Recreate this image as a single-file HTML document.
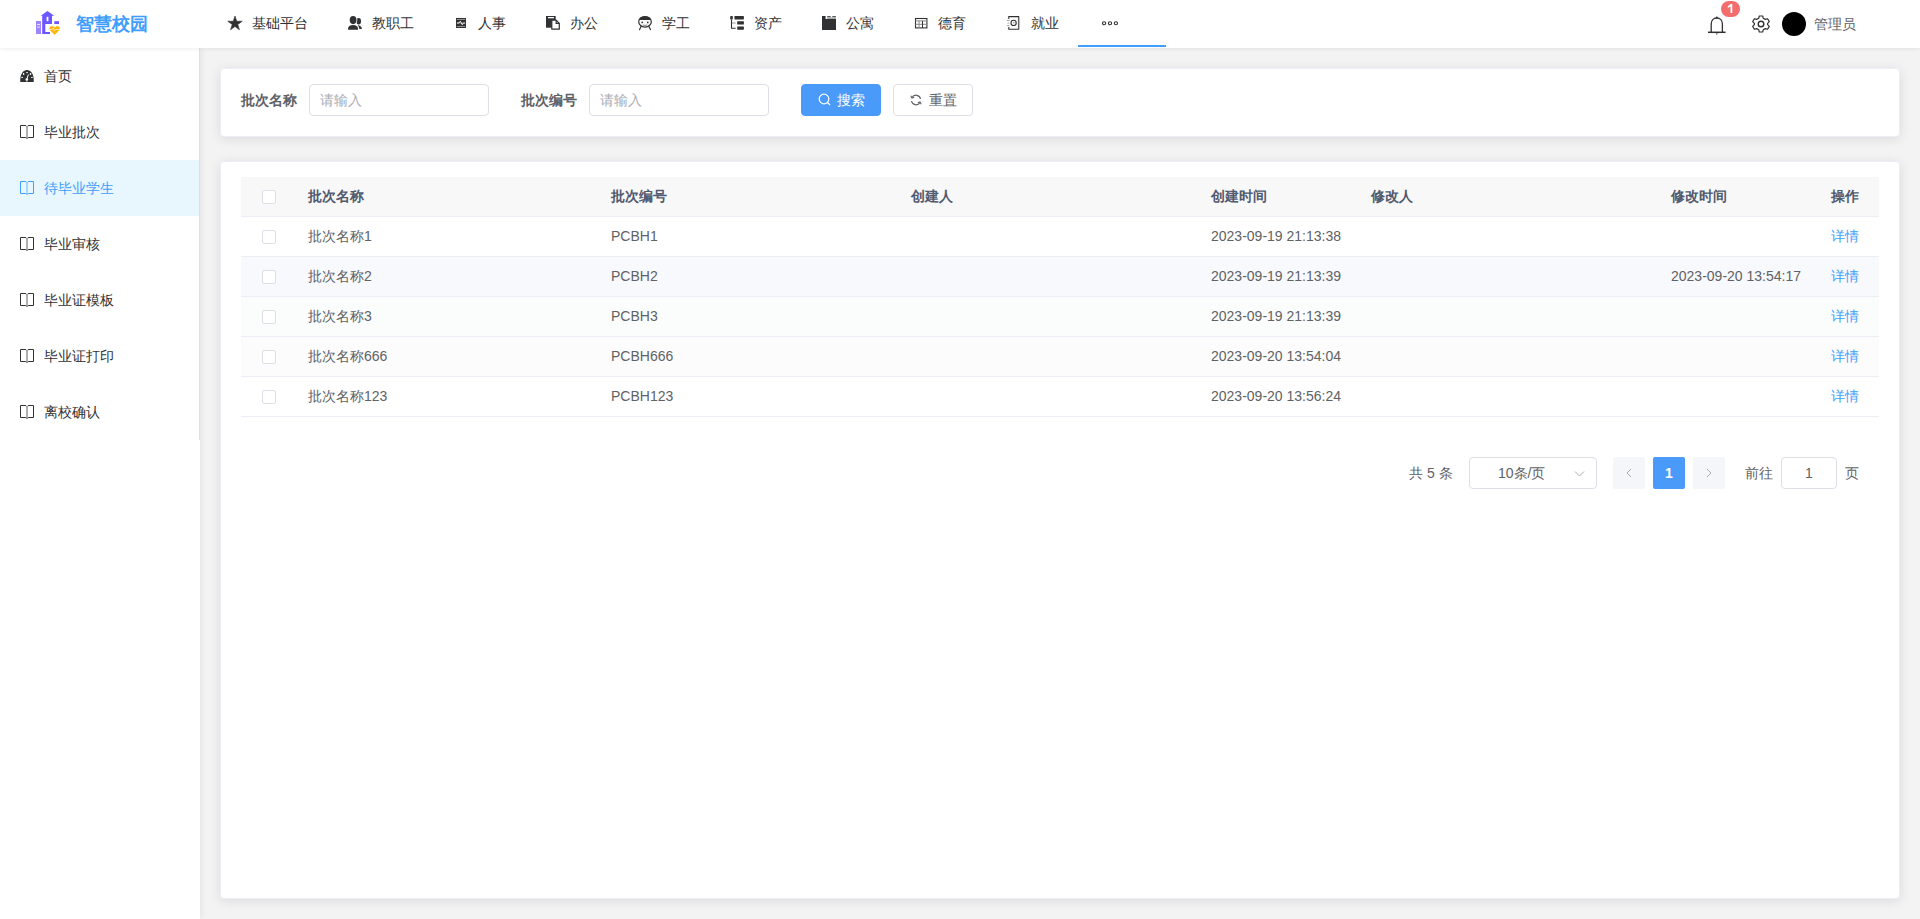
<!DOCTYPE html>
<html><head><meta charset="utf-8">
<style>
*{margin:0;padding:0;box-sizing:border-box}
html,body{width:1920px;height:919px;overflow:hidden;background:#fff;font-family:"Liberation Sans",sans-serif;font-size:14px;color:#606266}
.abs{position:absolute}
#header{position:absolute;left:0;top:0;width:1920px;height:48px;background:#fff;z-index:5;box-shadow:0 1px 4px rgba(0,21,41,.08)}
.nav{position:absolute;top:0;height:48px;line-height:48px;color:#303133;white-space:nowrap}
.nav svg{position:absolute;top:16px;left:0;overflow:visible}
.nav span{position:absolute;left:24px;top:-1px}
#side{position:absolute;left:0;top:48px;width:200px;height:871px;background:#fff;z-index:3;box-shadow:2px 0 6px rgba(0,21,41,.06)}
#menu{position:absolute;left:0;top:0;width:200px;height:392px;border-right:1px solid #dcdfe6}
.mi{position:absolute;left:0;width:199px;height:56px;line-height:56px;color:#303133}
.mi.act{background:#e8f7fe;color:#409eff}
.mi svg{position:absolute;left:20px;top:21px}
.mi span{position:absolute;left:44px;top:0}
#main{position:absolute;left:200px;top:48px;width:1720px;height:871px;background:#f3f3f3}
.card{position:absolute;background:#fff;border:1px solid #ebeef5;border-radius:4px;box-shadow:0 2px 12px 0 rgba(0,0,0,.1)}
.lbl{position:absolute;top:84px;height:32px;line-height:32px;font-weight:bold;color:#606266}
.inp{position:absolute;top:84px;height:32px;width:180px;border:1px solid #dcdfe6;border-radius:4px;line-height:30px;padding-left:10px;color:#a8abb2;background:#fff}
.btn{position:absolute;top:84px;height:32px;width:80px;border-radius:4px;line-height:30px}
table{border-collapse:collapse;table-layout:fixed}

.tr{position:absolute;left:241px;width:1638px;height:40px;border-bottom:1px solid #ebeef5;line-height:39px;color:#606266}
.tr.th{background:#f8f8f9;color:#515a6e;font-weight:bold}
.tr span{position:absolute;top:0;white-space:nowrap}
.tr .lnk{color:#409eff}
.cb{position:absolute;left:21px;top:13px;width:14px;height:14px;border:1px solid #dcdfe6;border-radius:2px;background:#fff}
</style></head><body>

<div id="header">
  <!-- logo -->
  <svg class="abs" style="left:36px;top:10px" width="26" height="26" viewBox="0 0 26 26">
    <rect x="0" y="11" width="5" height="13" fill="#9d85ff"/>
    <rect x="1" y="14" width="3" height="1" fill="#fff" opacity=".8"/><rect x="1" y="16.6" width="3" height="1" fill="#fff" opacity=".8"/>
    <path d="M4.8 5.7 L11.4 0.9 L18.3 5.7 L16 5.7 L16 14 L9.3 14 L9.3 22 L14 22 L14 24 L6.2 24 L6.2 5.7 Z" fill="#6b57ff"/>
    <rect x="10.6" y="6.8" width="1.8" height="4.4" fill="#fff"/>
    <rect x="18.3" y="11.2" width="4.7" height="2.8" fill="#6b57ff"/>
    <path d="M18.6 25.3 L13.9 20.6 C12.4 19.1 12.9 15.7 15.9 15.7 C17.2 15.7 18.1 16.5 18.6 17.2 C19.1 16.5 20 15.7 21.3 15.7 C24.3 15.7 24.8 19.1 23.3 20.6 Z" fill="#ffb400" stroke="#fff" stroke-width="0.9"/>
    <path d="M14 19.4 L16.3 19.4 L17.2 18 L18.4 20.8 L19.4 19.4 L23.2 19.4" fill="none" stroke="#fff" stroke-width="0.7"/>
  </svg>
  <div class="abs" style="left:76px;top:0;height:48px;line-height:48px;font-size:18px;font-weight:bold;color:#409eff;letter-spacing:0px">智慧校园</div>

  <div class="nav" style="left:228px"><svg width="14" height="14" viewBox="0 0 14 14"><path d="M7.00 0.00 L8.71 5.25 L14.23 5.25 L9.76 8.50 L11.47 13.75 L7.00 10.50 L2.53 13.75 L4.24 8.50 L-0.23 5.25 L5.29 5.25 Z" fill="#303133" stroke="#303133" stroke-width="0.6" stroke-linejoin="round"/></svg><span>基础平台</span></div>
  <div class="nav" style="left:348px"><svg width="14" height="14" viewBox="0 0 14 14"><ellipse cx="10.7" cy="5.3" rx="2.3" ry="3.2" fill="#303133"/><path d="M9.5 9 C12 9.2 13.9 10.8 13.9 12.9 L11.5 12.9 Z" fill="#303133"/><ellipse cx="5.1" cy="4.1" rx="4.2" ry="4.9" fill="#fff"/><path d="M-0.7 14 L-0.7 12 C-0.7 9.5 1.5 8.1 5 8.1 C8.5 8.1 10.8 9.5 10.8 12 L10.8 14 Z" fill="#fff"/><ellipse cx="5.1" cy="4.1" rx="3.4" ry="4.1" fill="#303133"/><path d="M0.1 13.8 L0.1 12.2 C0.1 10.2 2 8.9 5 8.9 C8 8.9 10 10.2 10 12.2 L10 13.8 Z" fill="#303133"/></svg><span>教职工</span></div>
  <div class="nav" style="left:455px"><svg width="14" height="14" viewBox="0 0 14 14"><rect x="1" y="2" width="10" height="10" fill="#303133"/><rect x="1.8" y="3.2" width="8.4" height="0.7" fill="#bbb"/><rect x="1.8" y="10.1" width="8.4" height="0.7" fill="#bbb"/><rect x="1.8" y="6.6" width="8.4" height="0.9" fill="#888"/><path d="M2 7 L4 7 L5.3 5.2 L7.3 8.8 L8.3 7 L10 7" stroke="#fff" stroke-width="0.9" fill="none"/></svg><span style="left:23px">人事</span></div>
  <div class="nav" style="left:546px"><svg width="14" height="14" viewBox="0 0 14 14"><rect x="0" y="0" width="9.7" height="11.7" fill="#303133"/><rect x="2" y="1" width="6" height="1.3" fill="#fff"/><path d="M5.8 4.1 H10.2 L13.3 7.3 V13.2 H5.8 Z" fill="#fff" stroke="#303133" stroke-width="1.2" stroke-linejoin="round"/><path d="M10.2 4.1 V7.3 H13.3" fill="none" stroke="#303133" stroke-width="1.2"/></svg><span>办公</span></div>
  <div class="nav" style="left:638px"><svg width="14" height="14" viewBox="0 0 14 14"><ellipse cx="7" cy="5.8" rx="6.3" ry="5.3" fill="#fff" stroke="#303133" stroke-width="1.2"/><path d="M1 4 C1.6 1.2 4.3 0.3 7 0.3 C9.7 0.3 12.4 1.2 13 4 Z" fill="#303133"/><circle cx="4.2" cy="6.4" r="0.85" fill="#303133"/><circle cx="9.8" cy="6.4" r="0.85" fill="#303133"/><path d="M4.8 8.8 Q7 10.2 9.2 8.8" stroke="#888" stroke-width="1" fill="none"/><path d="M3.2 10.3 L1.6 13.6 M10.8 10.3 L12.4 13.6" stroke="#303133" stroke-width="1.2" stroke-linecap="round"/></svg><span>学工</span></div>
  <div class="nav" style="left:730px"><svg width="14" height="14" viewBox="0 0 14 14"><rect x="0.2" y="0.1" width="2.6" height="3.3" rx="0.6" fill="#303133"/><path d="M1.5 3.4 V12.3 H5.7" stroke="#303133" stroke-width="1.1" fill="none"/><path d="M2 7 H5.7" stroke="#999" stroke-width="1"/><rect x="4.5" y="0" width="9.4" height="3.5" rx="0.4" fill="#303133"/><rect x="7.2" y="5.2" width="6.7" height="3.4" rx="0.4" fill="#303133"/><rect x="7.2" y="10.4" width="6.7" height="3.3" rx="0.4" fill="#303133"/></svg><span>资产</span></div>
  <div class="nav" style="left:822px"><svg width="14" height="14" viewBox="0 0 14 14"><path d="M0 0 H3.6 V3 H14 V14 H0 Z" fill="#303133"/><rect x="5.2" y="0.2" width="3.5" height="1.1" fill="#303133"/><rect x="10.3" y="0.2" width="3.6" height="1.1" fill="#303133"/><rect x="5.2" y="1.3" width="8.7" height="1.7" fill="#aaa"/></svg><span>公寓</span></div>
  <div class="nav" style="left:914px"><svg width="14" height="14" viewBox="0 0 14 14"><rect x="1.5" y="2.5" width="11.4" height="9.4" fill="none" stroke="#303133" stroke-width="1.1"/><path d="M1.5 4.9 H12.9 M5 4.9 V11.9 M1.5 8.3 H12.9" stroke="#888" stroke-width="1"/><path d="M8.5 4.9 V11.9" stroke="#303133" stroke-width="1"/></svg><span>德育</span></div>
  <div class="nav" style="left:1007px"><svg width="14" height="14" viewBox="0 0 14 14"><path d="M1.8 3 V0.6 H11.6 V13.2 H1.8 V11" stroke="#303133" stroke-width="1.1" fill="none"/><path d="M11.6 1 V13" stroke="#666" stroke-width="1.4"/><path d="M0 4.5 H2.6 M0.4 7.2 H2.2 M0 9.6 H2.6" stroke="#999" stroke-width="0.9"/><circle cx="6.6" cy="6.9" r="2.6" fill="none" stroke="#303133" stroke-width="1.1"/><circle cx="6.8" cy="6.7" r="0.8" fill="#999"/></svg><span>就业</span></div>
  <svg class="abs" style="left:1102px;top:20px" width="17" height="6" viewBox="0 0 17 6"><ellipse cx="2.1" cy="3.3" rx="1.6" ry="1.5" fill="none" stroke="#303133" stroke-width="1.1"/><ellipse cx="8" cy="3.3" rx="1.6" ry="1.5" fill="none" stroke="#303133" stroke-width="1.1"/><ellipse cx="13.9" cy="3.3" rx="1.6" ry="1.5" fill="none" stroke="#303133" stroke-width="1.1"/></svg>
  <div class="abs" style="left:1078px;top:45px;width:88px;height:2px;background:#409eff"></div>

  <!-- right -->
  <svg class="abs" style="left:1707px;top:15px" width="20" height="20" viewBox="0 0 20 20"><path d="M4.2 17 L4.2 9 C4.2 5.5 6.5 3 9.8 3 C13.1 3 15.4 5.5 15.4 9 L15.4 17" fill="none" stroke="#303133" stroke-width="1.3"/><path d="M1 17.3 L18.6 17.3" stroke="#303133" stroke-width="1.5"/><circle cx="9.8" cy="2.5" r="1" fill="#303133"/><path d="M8.6 18.5 L11 18.5 L9.8 19.8Z" fill="#303133"/></svg>
  <svg class="abs" style="left:1721px;top:1px" width="19" height="16" viewBox="0 0 19 16"><rect x="0" y="0" width="19" height="16" rx="8" fill="#f56c6c"/><path d="M6.8 5.2 L9.6 3.1 L11.3 3.1 L11.3 12.1 L9.5 12.1 L9.5 5.6 L6.8 7.1 Z" fill="#fff"/></svg>
  <svg class="abs" style="left:1751px;top:14px" width="20" height="20" viewBox="0 0 20 20"><path d="M8.3 2 L11.7 2 L12.3 4.3 L14.3 5.4 L16.6 4.7 L18.3 7.6 L16.6 9.3 L16.6 10.7 L18.3 12.4 L16.6 15.3 L14.3 14.6 L12.3 15.7 L11.7 18 L8.3 18 L7.7 15.7 L5.7 14.6 L3.4 15.3 L1.7 12.4 L3.4 10.7 L3.4 9.3 L1.7 7.6 L3.4 4.7 L5.7 5.4 L7.7 4.3 Z" fill="none" stroke="#303133" stroke-width="1.2" stroke-linejoin="round"/><circle cx="10" cy="10" r="2.8" fill="none" stroke="#303133" stroke-width="1.4"/></svg>
  <div class="abs" style="left:1782px;top:12px;width:24px;height:24px;border-radius:12px;background:#000"></div>
  <div class="abs" style="left:1814px;top:0;line-height:48px;color:#606266">管理员</div>
</div>

<div id="side">
  <div id="menu">
    <div class="mi" style="top:0"><svg width="14" height="14" viewBox="0 0 14 14" style="top:22px"><path d="M0.3 11.9 C-0.2 4.5 3 0.1 7 0.1 C11 0.1 14.2 4.5 13.7 11.9 Z" fill="#303133"/><ellipse cx="3.6" cy="3.9" rx="0.8" ry="1" fill="#fff"/><rect x="6.2" y="2.1" width="1.6" height="1" fill="#fff"/><ellipse cx="10.5" cy="3.9" rx="0.8" ry="1" fill="#fff"/><rect x="1.3" y="6.9" width="1.6" height="1" fill="#fff"/><rect x="11.1" y="6.9" width="1.6" height="1" fill="#fff"/><path d="M8.4 4.5 L6.9 9" stroke="#fff" stroke-width="1"/><circle cx="6.8" cy="9.6" r="1.3" fill="#fff"/><rect x="6.4" y="10.5" width="0.8" height="1.4" fill="#bbb"/></svg><span>首页</span></div>
    <div class="mi" style="top:56px"><svg width="14" height="14" viewBox="0 0 14 14"><path d="M6.5 1.3 C6.2 0.6 5.8 0.5 5 0.5 H0.5 V12.5 H5.5 C6 12.5 6.5 12.8 6.7 13.4 H7.3 C7.5 12.8 8 12.5 8.5 12.5 H13.5 V0.5 H9 C8.2 0.5 7.8 0.6 7.5 1.3" fill="none" stroke="#303133" stroke-width="1"/><rect x="6.3" y="1.3" width="1.4" height="11.4" fill="#303133" opacity="0.55"/></svg><span>毕业批次</span></div>
    <div class="mi act" style="top:112px"><svg width="14" height="14" viewBox="0 0 14 14"><path d="M6.5 1.3 C6.2 0.6 5.8 0.5 5 0.5 H0.5 V12.5 H5.5 C6 12.5 6.5 12.8 6.7 13.4 H7.3 C7.5 12.8 8 12.5 8.5 12.5 H13.5 V0.5 H9 C8.2 0.5 7.8 0.6 7.5 1.3" fill="none" stroke="#409eff" stroke-width="1"/><rect x="6.3" y="1.3" width="1.4" height="11.4" fill="#409eff" opacity="0.55"/></svg><span>待毕业学生</span></div>
    <div class="mi" style="top:168px"><svg width="14" height="14" viewBox="0 0 14 14"><path d="M6.5 1.3 C6.2 0.6 5.8 0.5 5 0.5 H0.5 V12.5 H5.5 C6 12.5 6.5 12.8 6.7 13.4 H7.3 C7.5 12.8 8 12.5 8.5 12.5 H13.5 V0.5 H9 C8.2 0.5 7.8 0.6 7.5 1.3" fill="none" stroke="#303133" stroke-width="1"/><rect x="6.3" y="1.3" width="1.4" height="11.4" fill="#303133" opacity="0.55"/></svg><span>毕业审核</span></div>
    <div class="mi" style="top:224px"><svg width="14" height="14" viewBox="0 0 14 14"><path d="M6.5 1.3 C6.2 0.6 5.8 0.5 5 0.5 H0.5 V12.5 H5.5 C6 12.5 6.5 12.8 6.7 13.4 H7.3 C7.5 12.8 8 12.5 8.5 12.5 H13.5 V0.5 H9 C8.2 0.5 7.8 0.6 7.5 1.3" fill="none" stroke="#303133" stroke-width="1"/><rect x="6.3" y="1.3" width="1.4" height="11.4" fill="#303133" opacity="0.55"/></svg><span>毕业证模板</span></div>
    <div class="mi" style="top:280px"><svg width="14" height="14" viewBox="0 0 14 14"><path d="M6.5 1.3 C6.2 0.6 5.8 0.5 5 0.5 H0.5 V12.5 H5.5 C6 12.5 6.5 12.8 6.7 13.4 H7.3 C7.5 12.8 8 12.5 8.5 12.5 H13.5 V0.5 H9 C8.2 0.5 7.8 0.6 7.5 1.3" fill="none" stroke="#303133" stroke-width="1"/><rect x="6.3" y="1.3" width="1.4" height="11.4" fill="#303133" opacity="0.55"/></svg><span>毕业证打印</span></div>
    <div class="mi" style="top:336px"><svg width="14" height="14" viewBox="0 0 14 14"><path d="M6.5 1.3 C6.2 0.6 5.8 0.5 5 0.5 H0.5 V12.5 H5.5 C6 12.5 6.5 12.8 6.7 13.4 H7.3 C7.5 12.8 8 12.5 8.5 12.5 H13.5 V0.5 H9 C8.2 0.5 7.8 0.6 7.5 1.3" fill="none" stroke="#303133" stroke-width="1"/><rect x="6.3" y="1.3" width="1.4" height="11.4" fill="#303133" opacity="0.55"/></svg><span>离校确认</span></div>
  </div>
</div>

<div id="main"></div>

<!-- search card -->
<div class="card" style="left:220px;top:68px;width:1680px;height:69px"></div>
<div class="lbl" style="left:241px">批次名称</div>
<div class="inp" style="left:309px">请输入</div>
<div class="lbl" style="left:521px">批次编号</div>
<div class="inp" style="left:589px">请输入</div>
<div class="btn" style="left:801px;background:#4a9bf9;color:#fff;border:1px solid #4a9bf9">
  <svg class="abs" style="left:16px;top:8px" width="14" height="14" viewBox="0 0 14 14"><circle cx="6" cy="6" r="4.8" fill="none" stroke="#fff" stroke-width="1.2"/><path d="M9.5 9.5 L12 12" stroke="#fff" stroke-width="1.2"/></svg>
  <span class="abs" style="left:35px;top:0">搜索</span>
</div>
<div class="btn" style="left:893px;background:#fff;color:#606266;border:1px solid #dcdfe6">
  <svg class="abs" style="left:16px;top:9px" width="12" height="12" viewBox="0 0 12 12"><path d="M10.5 5 A4.6 4.6 0 0 0 2 3.5 M1.5 7 A4.6 4.6 0 0 0 10 8.5" fill="none" stroke="#606266" stroke-width="1.2"/><path d="M0.8 1.8 L2 4 L4.2 3.2 M11.2 10.2 L10 8 L7.8 8.8" fill="none" stroke="#606266" stroke-width="1.1"/></svg>
  <span class="abs" style="left:35px;top:0">重置</span>
</div>

<!-- table card -->
<div class="card" style="left:220px;top:161px;width:1680px;height:738px"></div>
<div id="tbl">
<div class="tr th" style="top:177px">
<i class="cb"></i>
<span style="left:67px">批次名称</span>
<span style="left:370px">批次编号</span>
<span style="left:670px">创建人</span>
<span style="left:970px">创建时间</span>
<span style="left:1130px">修改人</span>
<span style="left:1430px">修改时间</span>
<span style="left:1590px">操作</span>
</div>
<div class="tr" style="top:217px;background:#ffffff">
<i class="cb"></i>
<span style="left:67px">批次名称1</span>
<span style="left:370px">PCBH1</span>
<span style="left:970px">2023-09-19 21:13:38</span>
<span class="lnk" style="left:1590px">详情</span>
</div>
<div class="tr" style="top:257px;background:#f8f9fc">
<i class="cb"></i>
<span style="left:67px">批次名称2</span>
<span style="left:370px">PCBH2</span>
<span style="left:970px">2023-09-19 21:13:39</span>
<span style="left:1430px">2023-09-20 13:54:17</span>
<span class="lnk" style="left:1590px">详情</span>
</div>
<div class="tr" style="top:297px;background:#fbfdfc">
<i class="cb"></i>
<span style="left:67px">批次名称3</span>
<span style="left:370px">PCBH3</span>
<span style="left:970px">2023-09-19 21:13:39</span>
<span class="lnk" style="left:1590px">详情</span>
</div>
<div class="tr" style="top:337px;background:#fcfcfd">
<i class="cb"></i>
<span style="left:67px">批次名称666</span>
<span style="left:370px">PCBH666</span>
<span style="left:970px">2023-09-20 13:54:04</span>
<span class="lnk" style="left:1590px">详情</span>
</div>
<div class="tr" style="top:377px;background:#ffffff">
<i class="cb"></i>
<span style="left:67px">批次名称123</span>
<span style="left:370px">PCBH123</span>
<span style="left:970px">2023-09-20 13:56:24</span>
<span class="lnk" style="left:1590px">详情</span>
</div>
</div>

<div class="abs" style="left:1409px;top:457px;line-height:32px;color:#606266">共 5 条</div>
<div class="abs" style="left:1469px;top:457px;width:128px;height:32px;border:1px solid #dcdfe6;border-radius:4px;background:#fff">
  <span class="abs" style="left:28px;top:0;line-height:30px;color:#606266">10条/页</span>
  <svg class="abs" style="left:104px;top:10px" width="11" height="11" viewBox="0 0 11 11"><path d="M1 3.5 L5.5 8 L10 3.5" fill="none" stroke="#a8abb2" stroke-width="1"/></svg>
</div>
<div class="abs" style="left:1613px;top:457px;width:32px;height:32px;border-radius:2px;background:#f4f6f9"><svg class="abs" style="left:11px;top:11px" width="10" height="10" viewBox="0 0 10 10"><path d="M7 1 L3 5 L7 9" fill="none" stroke="#a8abb2" stroke-width="1"/></svg></div>
<div class="abs" style="left:1653px;top:457px;width:32px;height:32px;border-radius:2px;background:#4a9bf9;color:#fff;font-weight:bold;text-align:center;line-height:32px">1</div>
<div class="abs" style="left:1693px;top:457px;width:32px;height:32px;border-radius:2px;background:#f4f6f9"><svg class="abs" style="left:11px;top:11px" width="10" height="10" viewBox="0 0 10 10"><path d="M3 1 L7 5 L3 9" fill="none" stroke="#a8abb2" stroke-width="1"/></svg></div>
<div class="abs" style="left:1745px;top:457px;line-height:32px;color:#606266">前往</div>
<div class="abs" style="left:1781px;top:457px;width:56px;height:32px;border:1px solid #dcdfe6;border-radius:4px;background:#fff;text-align:center;line-height:30px;color:#606266">1</div>
<div class="abs" style="left:1845px;top:457px;line-height:32px;color:#606266">页</div>


</body></html>
